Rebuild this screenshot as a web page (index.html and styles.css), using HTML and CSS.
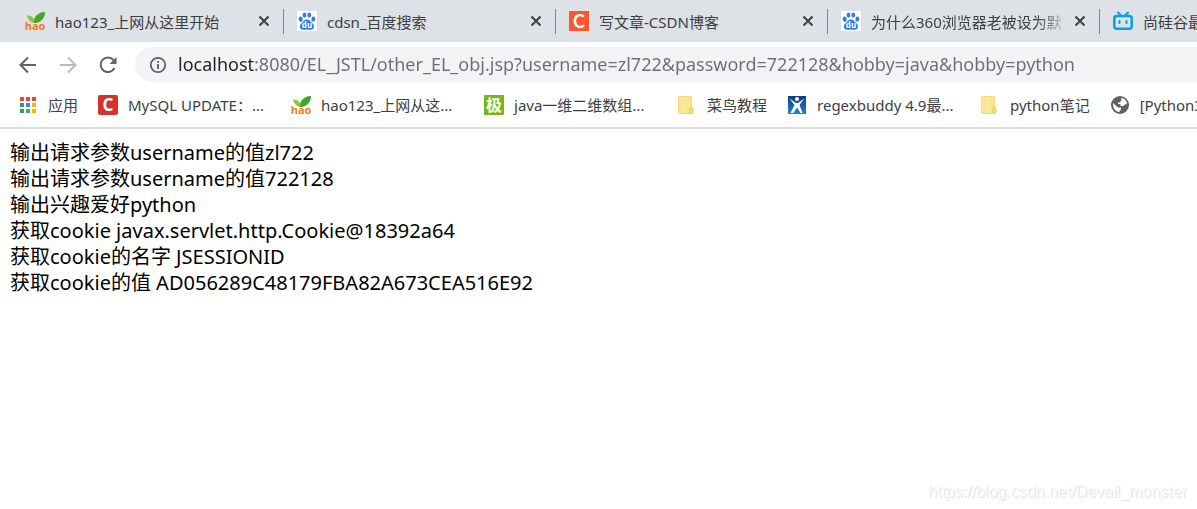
FILE: index.html
```html
<!DOCTYPE html>
<html lang="zh-CN">
<head>
  <meta charset="UTF-8">
  <meta name="viewport" content="width=device-width, initial-scale=1.0">
  <title>other_EL_obj.jsp</title>
  <link rel="stylesheet" href="styles.css">
</head>
<body>

  <!-- shared icons -->
  <svg class="symbols" aria-hidden="true">
    <symbol id="icon-hao" viewBox="0 0 20 20">
      <path d="M2 4.500C5 4 8 5.500 8.800 8.500C10.500 4 14 1.500 20 1C19.800 7 16 11.500 9.500 12C5.500 11.500 3 8.500 2 4.500Z" fill="#8cc63f"/>
      <path d="M20 1C19.800 7 16 11.500 9 12C9 6 13 1.500 20 1Z" fill="#45a332"/>
      <text x="10" y="18.500" text-anchor="middle" font-family="Open Sans, sans-serif" font-size="11" font-weight="700" fill="#f47b20">hao</text>
    </symbol>
    <symbol id="icon-baidu" viewBox="0 0 20 20">
      <rect width="20" height="20" fill="#fff"/>
      <g fill="#2a7cf7">
        <ellipse cx="3.700" cy="8.200" rx="2" ry="2.700" transform="rotate(-10 3.700 8.200)"/>
        <ellipse cx="7.500" cy="4.100" rx="1.900" ry="2.600"/>
        <ellipse cx="12.300" cy="4.100" rx="1.900" ry="2.600"/>
        <ellipse cx="16.300" cy="8" rx="1.900" ry="2.600" transform="rotate(10 16.300 8)"/>
        <path d="M10 8.200C12.500 8.200 13.300 10.500 14.800 11.800C17 13.500 17.800 15.200 16.600 17.300C15.200 19.600 12.500 18.500 10 18.500C7.500 18.500 4.800 19.600 3.400 17.300C2.200 15.200 3 13.500 5.200 11.800C6.700 10.500 7.500 8.200 10 8.200Z"/>
      </g>
      <text x="10" y="17.300" text-anchor="middle" font-family="Open Sans, sans-serif" font-size="8" font-weight="700" fill="#fff">du</text>
    </symbol>
    <symbol id="icon-close" viewBox="0 0 12 12">
      <path d="M1.500 1.500L10.500 10.500M10.500 1.500L1.500 10.500" stroke="#3c4043" stroke-width="2" fill="none"/>
    </symbol>
    <symbol id="icon-folder" viewBox="0 0 20 20">
      <path d="M1.500 1.500H14.500V13L16 14V18.500H1.500Z" fill="#ffe694"/>
      <path d="M14.500 12.500V1.500H1.500V18.500H13.500" stroke="#f7da7c" fill="none"/>
      <path d="M14 18.500C12.500 18.500 12 17 13 15.500L13.500 12.500H15L16 14V17Q16 18.500 14 18.500Z" fill="#ffdf70" stroke="#eec64f"/>
    </symbol>
  </svg>

  <header>
    <div class="tabs" role="tablist">
      <div class="tab">
        <button class="tab-title" role="tab"><svg class="favicon"><use href="#icon-hao"/></svg><span>hao123_上网从这里开始</span></button>
        <button class="tab-close" aria-label="关闭"><svg><use href="#icon-close"/></svg></button>
      </div>
      <div class="tab">
        <button class="tab-title" role="tab"><svg class="favicon"><use href="#icon-baidu"/></svg><span>cdsn_百度搜索</span></button>
        <button class="tab-close" aria-label="关闭"><svg><use href="#icon-close"/></svg></button>
      </div>
      <div class="tab">
        <button class="tab-title" role="tab">
          <svg class="favicon" viewBox="0 0 20 20">
            <rect width="20" height="20" fill="#fc5531"/>
            <text x="10" y="16.500" text-anchor="middle" font-family="Lato, sans-serif" font-size="18" font-weight="700" fill="#fff">C</text>
          </svg>
          <span>写文章-CSDN博客</span>
        </button>
        <button class="tab-close" aria-label="关闭"><svg><use href="#icon-close"/></svg></button>
      </div>
      <div class="tab">
        <button class="tab-title" role="tab"><svg class="favicon"><use href="#icon-baidu"/></svg><span class="fade">为什么360浏览器老被设为默</span></button>
        <button class="tab-close" aria-label="关闭"><svg><use href="#icon-close"/></svg></button>
      </div>
      <div class="tab">
        <button class="tab-title" role="tab">
          <svg class="favicon" viewBox="0 0 20 20" fill="none" stroke="#00a1e9" stroke-linecap="round">
            <path d="M5 1.500L7.500 4M15 1.500L12.500 4" stroke-width="2"/>
            <rect x="1.300" y="5" width="17.400" height="12.800" rx="2.500" stroke-width="2.500"/>
            <path d="M6.500 10V12M13.500 10V12" stroke-width="2"/>
          </svg>
          <span>尚硅谷最</span>
        </button>
      </div>
    </div>

    <div class="toolbar">
      <div class="nav-buttons">
        <button aria-label="后退">
          <svg viewBox="0 0 20 20"><path d="M18 10H3M10 2.500L2.500 10L10 17.500"/></svg>
        </button>
        <button aria-label="前进" disabled>
          <svg viewBox="0 0 20 20"><path d="M2 10H17M10 2.500L17.500 10L10 17.500"/></svg>
        </button>
        <button aria-label="重新加载">
          <svg viewBox="0 0 20 20"><path d="M16.500 13A7.300 7.300 0 1 1 15.500 5"/><path class="solid" d="M18.500 2V9H11.500Z"/></svg>
        </button>
      </div>
      <div class="address">
        <svg viewBox="0 0 18 18" aria-hidden="true">
          <circle cx="9" cy="9" r="7.200" fill="none" stroke="#5f6368" stroke-width="1.800"/>
          <path d="M9 8V13M9 5V6.800" stroke="#5f6368" stroke-width="1.900"/>
        </svg>
        <input type="text" aria-label="地址" value="localhost:8080/EL_JSTL/other_EL_obj.jsp?username=zl722&amp;password=722128&amp;hobby=java&amp;hobby=python">
      </div>
    </div>

    <nav class="bookmarks">
      <a href="#">
        <svg viewBox="0 0 20 20">
          <path d="M2 2h4v4h-4zM8 2h4v4h-4zM14 2h4v4h-4z" fill="#ea4335"/>
          <path d="M2 8h4v4h-4zM2 14h4v4h-4z" fill="#34a067"/>
          <path d="M8 8h4v4h-4z" fill="#2196f3"/>
          <path d="M14 8h4v4h-4zM14 14h4v4h-4z" fill="#fbb305"/>
          <path d="M8 14h4v4h-4z" fill="#4caf50"/>
        </svg>
        <span>应用</span>
      </a>
      <a href="#" class="long">
        <svg viewBox="0 0 20 20">
          <rect width="20" height="20" rx="2" fill="#d33329"/>
          <text x="10" y="16" text-anchor="middle" font-family="Open Sans, sans-serif" font-size="17" font-weight="700" fill="#fff">C</text>
        </svg>
        <span>MySQL UPDATE：...</span>
      </a>
      <a href="#" class="long"><svg><use href="#icon-hao"/></svg><span>hao123_上网从这...</span></a>
      <a href="#" class="long">
        <svg viewBox="0 0 20 20">
          <rect width="20" height="20" rx="1" fill="#76b516"/>
          <text x="10" y="16" text-anchor="middle" font-family="Noto Sans CJK SC, sans-serif" font-size="16" font-weight="700" fill="#fff">极</text>
        </svg>
        <span>java一维二维数组...</span>
      </a>
      <a href="#"><svg><use href="#icon-folder"/></svg><span>菜鸟教程</span></a>
      <a href="#" class="long">
        <svg viewBox="0 0 20 20">
          <defs><linearGradient id="sky" x2="0" y2="1"><stop stop-color="#063c88"/><stop offset="1" stop-color="#2387c4"/></linearGradient></defs>
          <rect x="1" y="1" width="18" height="18" fill="url(#sky)"/>
          <circle cx="10" cy="4" r="2" fill="#fff"/>
          <path d="M2.500 3.500L9 8H11L17.500 3.500L12.500 10L15.500 18H13.500L10 12.500L6.500 18H3.500L7.500 10Z" fill="#fff"/>
        </svg>
        <span>regexbuddy 4.9最...</span>
      </a>
      <a href="#"><svg><use href="#icon-folder"/></svg><span>python笔记</span></a>
      <a href="#">
        <svg viewBox="0 0 20 20">
          <circle cx="10" cy="10" r="9" fill="#5f6368"/>
          <path d="M11 3C14.500 3 17 6 17 9L15 9.500L13.500 11H10.500V9H8V7.500H9.500L11.500 5.500ZM3 8L8 12.500H11V14.500L9 17C5.500 16.500 2.500 13 3 8Z" fill="#fff"/>
        </svg>
        <span>[Python3</span>
      </a>
    </nav>
  </header>

  <main>
    输出请求参数username的值zl722<br>
    输出请求参数username的值722128<br>
    输出兴趣爱好python<br>
    获取cookie javax.servlet.http.Cookie@18392a64<br>
    获取cookie的名字 JSESSIONID<br>
    获取cookie的值 AD056289C48179FBA82A673CEA516E92
  </main>

  <div class="watermark">https://blog.csdn.net/Devail_monster</div>

</body>
</html>
```
FILE: styles.css
```css
body {
  margin: 0;
  background-color: #ffffff;
  font-family: "Noto Sans", "Noto Sans CJK SC", sans-serif;
  color: #000000;
}
button {
  padding: 0;
  border: none;
  background: none;
  font: inherit;
  color: inherit;
  cursor: pointer;
}
.symbols {
  display: none;
}
header {
  border-bottom: 2px solid #d9dbdf;
  font-size: 15px;
  color: #3c4043;
  overflow: hidden;
}

/* tab strip */
.tabs {
  display: flex;
  height: 42px;
  padding-left: 12px;
  background-color: #dee1e6;
}
.tab {
  position: relative;
  display: flex;
  flex: none;
  align-items: center;
  box-sizing: border-box;
  width: 272px;
  padding: 0 14px 0 13px;
}
.tab:not(:last-child)::after {
  content: "";
  position: absolute;
  right: 0;
  top: 9px;
  width: 1px;
  height: 25px;
  background-color: #808388;
}
.tab-title {
  display: flex;
  flex: 1;
  align-items: center;
  gap: 10px;
  min-width: 0;
  white-space: nowrap;
}
.tab-title .fade {
  mask-image: linear-gradient(to right, #000 165px, transparent 200px);
}
.favicon {
  flex: none;
  width: 20px;
  height: 20px;
}
.tab-close svg {
  display: block;
  width: 12px;
  height: 12px;
}

/* navigation buttons and address bar */
.toolbar {
  display: flex;
  align-items: center;
  gap: 17px;
  padding: 5px 0 0 18px;
}
.nav-buttons {
  display: flex;
  gap: 20px;
}
.nav-buttons svg {
  display: block;
  width: 20px;
  height: 20px;
  fill: none;
  stroke: #5f6368;
  stroke-width: 2;
}
.nav-buttons .solid {
  fill: #5f6368;
  stroke: none;
}
.nav-buttons button:disabled svg {
  stroke: #babcbe;
}
.address {
  display: flex;
  flex: 1;
  align-items: center;
  gap: 11px;
  height: 35px;
  margin-right: -20px;
  padding-left: 14px;
  border-radius: 18px;
  background-color: #f1f3f4;
}
.address svg {
  flex: none;
  width: 18px;
  height: 18px;
}
.address input {
  flex: 1;
  padding: 0 0 2px;
  border: none;
  outline: none;
  font: inherit;
  font-size: 18px;
  color: transparent;
  caret-color: #202124;
  /* host name is darker than the rest of the address */
  background: linear-gradient(to right, #202124 76px, #6b6e72 76px);
  background-clip: text;
}

/* bookmarks bar */
.bookmarks {
  display: flex;
  align-items: center;
  gap: 20px;
  height: 45px;
  padding-left: 18px;
}
.bookmarks a {
  display: flex;
  flex: none;
  align-items: center;
  gap: 10px;
  color: inherit;
  text-decoration: none;
  white-space: nowrap;
}
.bookmarks .long {
  width: 173px;
}
.bookmarks svg {
  flex: none;
  width: 20px;
  height: 20px;
}

/* page output */
main {
  padding: 11px 10px;
  font-size: 20px;
  line-height: 26px;
}
.watermark {
  position: fixed;
  right: 10px;
  bottom: 8px;
  font-family: "Liberation Sans", Arial, sans-serif;
  font-size: 16px;
  color: #f8f8f8;
  text-shadow: 1px 1px 0 #e4e4e4;
}
```
